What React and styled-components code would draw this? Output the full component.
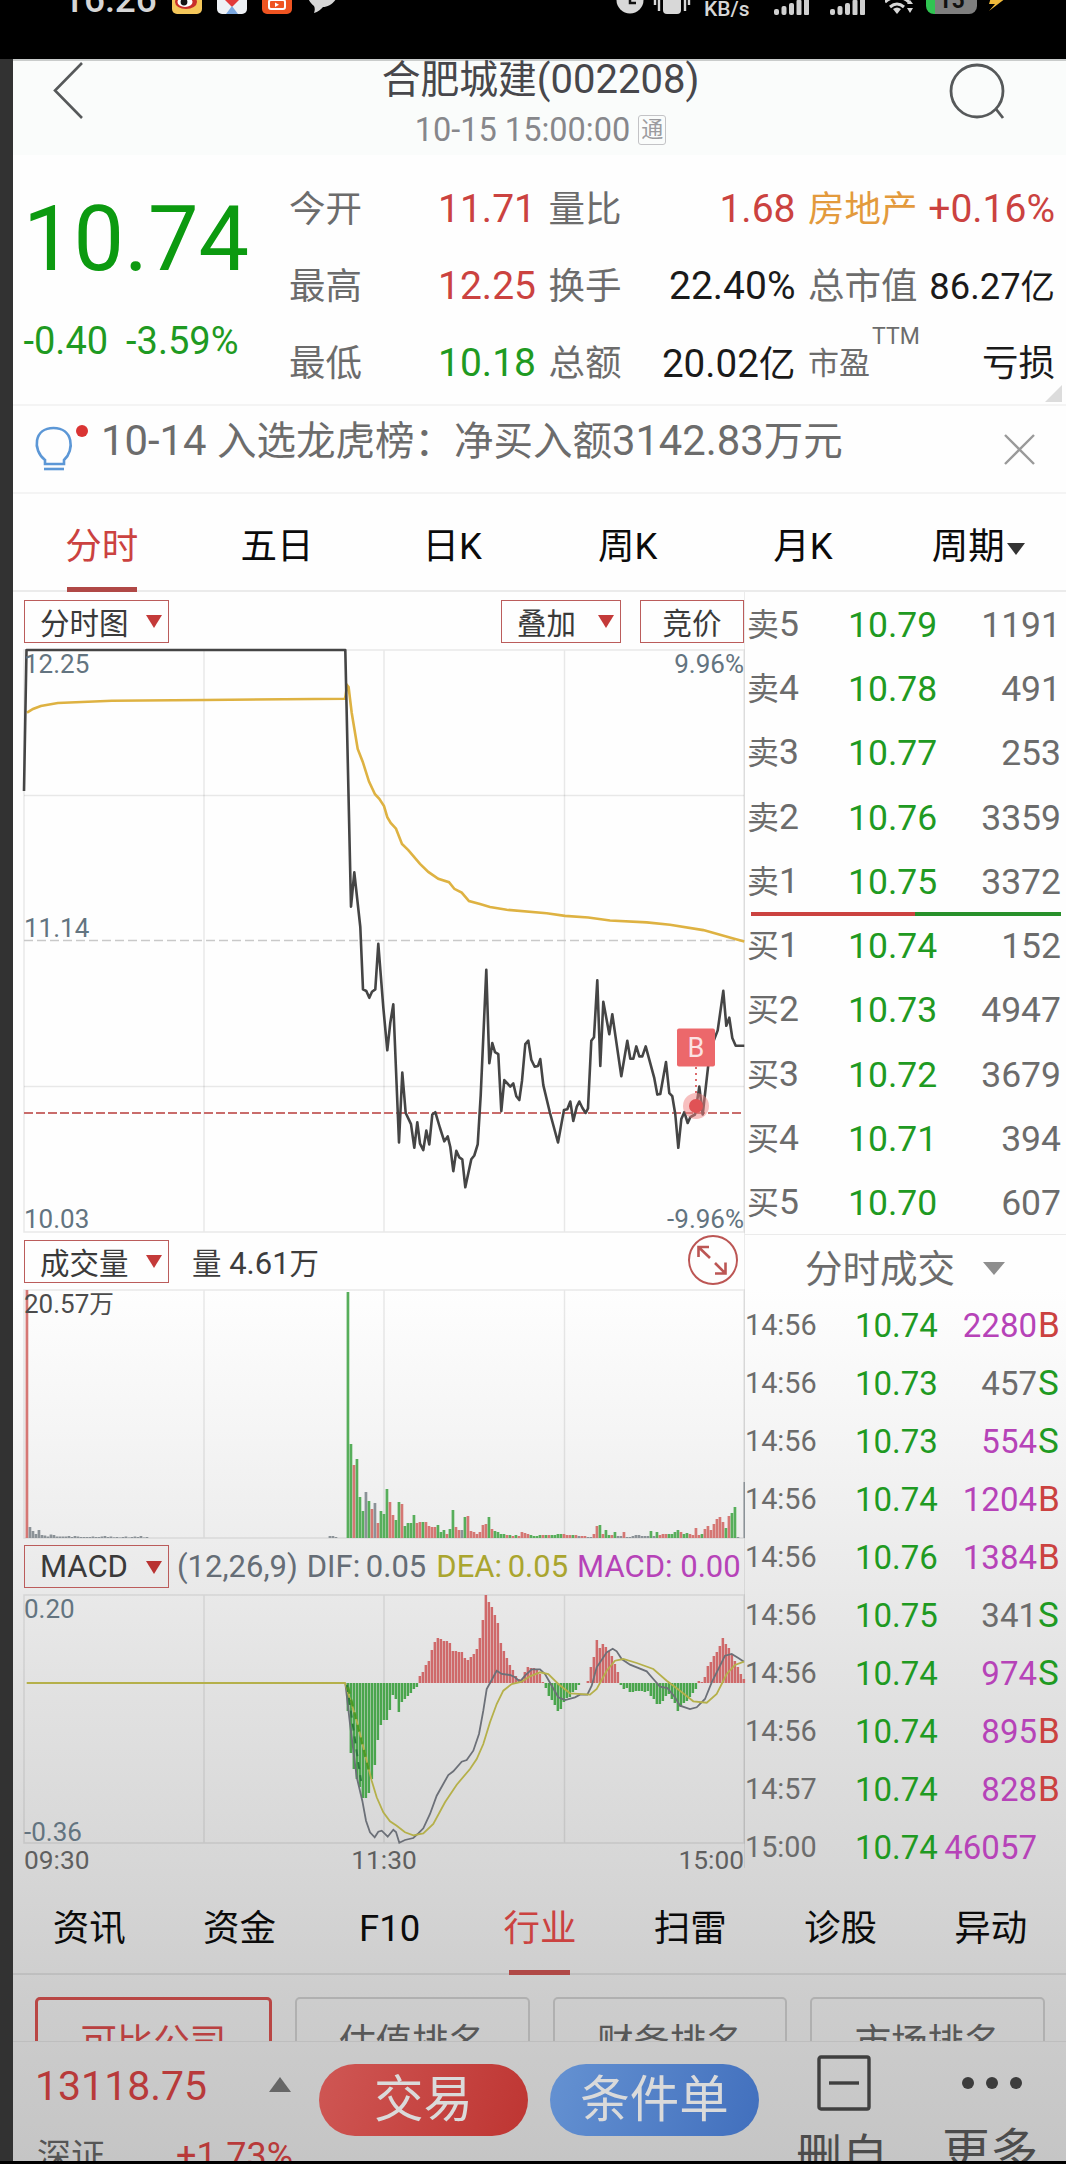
import styled, { createGlobalStyle } from "styled-components";

const colors = {
	red: "#cb4240",
	green: "#1f9a22",
	grey: "#6c6c6c",
	black: "#1a1a1a",
	orange: "#e39a3c",
	purple: "#b643b8",
	slate: "#637480",
	grid: "rgba(0, 0, 0, 0.075)",
};

const GlobalStyle = createGlobalStyle`
	* {
		box-sizing: border-box;
	}
	body {
		margin: 0;
		background: #000;
		font-family: Roboto, "Noto Sans CJK SC", sans-serif;
		white-space: nowrap;
	}
	svg {
		display: block;
		flex-shrink: 0;
	}
`;

const Screen = styled.div`
	width: 1066px;
	height: 2164px;
	overflow: hidden;
	display: flex;
	flex-direction: column;
	border-bottom: 3px solid #000;
`;

/* ---------- status bar ---------- */

const StatusBar = styled.div`
	height: 59px;
	flex-shrink: 0;
	background: #000;
	color: #d6d6d6;
	overflow: hidden;
`;

const StatusClock = styled.span`
	font-size: 37px;
	line-height: 36px;
	font-weight: 500;
	width: 109px;
	margin-top: -18px;
`;

const StatusRow = styled.div`
	display: flex;
	height: 18px;
	padding-left: 63px;
	overflow: hidden;
`;

const StatusSpeed = styled.span`
	font-size: 21px;
	line-height: 20px;
	font-weight: 500;
	width: 46px;
	margin: -1px 24px 0 13px;
`;

const Battery = styled.span`
	width: 51px;
	height: 34px;
	margin: -20px 9px 0 13px;
	border-radius: 8px;
	background: linear-gradient(90deg, #30c552 9px, #7e7e7e 9px);
	color: #111;
	font-size: 23px;
	font-weight: 700;
	line-height: 41px;
	text-align: center;
`;

/* ---------- page ---------- */

const Page = styled.main`
	flex: 1;
	min-height: 0;
	display: flex;
	flex-direction: column;
	overflow: hidden;
	border-left: 13px solid #323232;
	background: linear-gradient(
		180deg,
		#fefefe 1230px,
		#f5f5f5 1370px,
		#ededed 1480px,
		#e1e1e1 1640px,
		#d7d7d7 1800px,
		#cdcdcd 1940px,
		#c5c5c5 2102px
	);
`;

const Header = styled.header`
	height: 96px;
	flex-shrink: 0;
	display: flex;
	justify-content: space-between;
	border-top: 2px solid #c9cccb;
	background: #fafcfb;
`;

const Heading = styled.div`
	display: flex;
	flex-direction: column;
	align-items: center;
	margin-left: 22px;
`;

const Title = styled.h1`
	margin: -3px 0 0;
	font-size: 40px;
	font-weight: 400;
	line-height: 44px;
	color: #47474b;
`;

const Han = styled.span`
	font-size: ${({ $size }) => $size || 0.95}em;
`;

const SubTitle = styled.div`
	display: flex;
	align-items: center;
	gap: 8px;
	height: 54px;
	padding-top: 3px;
	font-size: 32.5px;
	color: #87878b;
`;

const Tag = styled.span`
	width: 28px;
	height: 30px;
	border: 1.5px solid #c3c3c6;
	border-radius: 3px;
	font-size: 22px;
	line-height: 27px;
	text-align: center;
	color: #9b9b9f;
`;

/* ---------- quote ---------- */

const Quote = styled.section`
	position: relative;
	height: 251px;
	flex-shrink: 0;
	display: flex;
	padding: 15px 11px 0 0;
	border-bottom: 2px solid #f4f4f4;
`;

const LastPrice = styled.div`
	width: 276px;
	color: ${colors.green};
`;

const Price = styled.div`
	font-size: 90px;
	line-height: 100px;
	margin-top: 20px;
	padding-left: 10px;
	color: #0c9a10;
`;

const Change = styled.div`
	display: flex;
	gap: 18px;
	padding: 29px 0 0 10.5px;
	font-size: 38px;
	line-height: 44px;
`;

const Stats = styled.div`
	flex: 1;
	display: grid;
	grid-template-columns: 247px 247px 247px;
	column-gap: 12.5px;
	grid-auto-rows: 77px;
`;

const Stat = styled.div`
	display: flex;
	align-items: center;
	justify-content: space-between;
	font-size: 37px;
	color: ${colors.grey};
`;

const StatLabel = styled.span`
	display: flex;
	margin-top: -4px;
	color: ${({ $tone }) => colors[$tone] || "inherit"};
	font-size: ${({ $small }) => ($small ? 31 : 36.5)}px;
`;

const Superscript = styled.sup`
	margin: -14px 0 0 2px;
	font-size: 23px;
	line-height: 26px;
`;

const StatValue = styled.span`
	margin-top: ${({ $lift }) => ($lift ? -4 : 0)}px;
	color: ${({ $tone }) => colors[$tone]};
	font-size: ${({ $size }) => $size || 39}px;
`;

const Corner = styled.i`
	position: absolute;
	right: 4px;
	bottom: 2px;
	border-left: 17px solid transparent;
	border-bottom: 17px solid #dcdcdc;
`;

const Notice = styled.section`
	height: 88px;
	flex-shrink: 0;
	display: flex;
	align-items: center;
	padding: 0 31px 0 20px;
	border-bottom: 2px solid #f4f4f4;
	font-size: 41.8px;
	color: ${colors.grey};

	svg:first-child {
		margin-top: 3px;
	}
`;

const NoticeText = styled.p`
	flex: 1;
	margin: -15px 0 0 10px;
	line-height: 50px;
`;

/* ---------- tabs ---------- */

const Tabs = styled.nav`
	height: ${({ $height }) => $height}px;
	flex-shrink: 0;
	display: flex;
	padding-left: 1px;
	border-bottom: 2px solid ${colors.grid};
	font-size: 36.5px;
`;

const Tab = styled.button`
	flex: 1;
	position: relative;
	display: flex;
	align-items: center;
	justify-content: center;
	gap: 2px;
	padding: ${({ $drop }) => $drop}px 0 0;
	border: 0;
	background: none;
	font: inherit;
	line-height: 54px;
	color: ${({ $active }) => ($active ? colors.red : "#0b0b0b")};

	&::after {
		content: "";
		display: ${({ $active }) => ($active ? "block" : "none")};
		position: absolute;
		bottom: -2px;
		width: ${({ $line }) => $line}px;
		height: 5px;
		background: #b04846;
	}
`;

const Caret = styled.i`
	margin-top: ${({ $drop }) => $drop || 2}px;
	border: ${({ $w }) => $w / 2}px solid transparent;
	border-top: ${({ $h }) => $h}px solid ${({ $color }) => $color};
	border-bottom: 0;
`;

/* ---------- charts ---------- */

const Market = styled.section`
	height: 1276px;
	flex-shrink: 0;
	display: flex;
`;

const Charts = styled.div`
	width: 731px;
	flex-shrink: 0;
	padding-left: 11px;
	display: flex;
	flex-direction: column;
`;

const ChartBar = styled.div`
	height: ${({ $height }) => $height || 58}px;
	flex-shrink: 0;
	display: flex;
	align-items: center;
	font-size: 31px;
	color: #3d3d3d;
`;

const Picker = styled.button`
	width: ${({ $w }) => $w || 145}px;
	height: 43px;
	flex-shrink: 0;
	display: flex;
	align-items: center;
	justify-content: ${({ $center }) => ($center ? "center" : "space-between")};
	margin-left: ${({ $push }) => $push || 0};
	padding: 0 6px 1px ${({ $center }) => ($center ? 6 : 15)}px;
	border: 1.5px solid #bb5c5b;
	background: none;
	font-family: inherit;
	font-size: ${({ $size }) => $size || 29.5}px;
	color: #3a3a3a;
`;

const Reading = styled.span`
	margin-left: ${({ $gap }) => $gap}px;
	color: ${({ $color }) => $color};
	word-spacing: ${({ $tight }) => ($tight ? -2 : 0)}px;
`;

const RoundButton = styled.button`
	width: 50px;
	height: 50px;
	margin: -3px 6px 0 auto;
	padding: 0;
	border: 2.5px solid #bc5654;
	border-radius: 50%;
	background: none;
`;

const Plot = styled.div`
	position: relative;
	height: ${({ $height }) => $height}px;
	flex-shrink: 0;

	svg {
		overflow: visible;
	}
`;

const AxisLabel = styled.span`
	position: absolute;
	${({ $right }) => ($right ? "right: 0" : "left: 0")};
	top: ${({ $top }) => $top}px;
	font-size: 26px;
	line-height: 30px;
	color: ${({ $dark }) => ($dark ? "#4c4c4c" : colors.slate)};
`;

const TimeAxis = styled.div`
	display: flex;
	justify-content: space-between;
	padding-top: 1px;
	font-size: 26.3px;
	line-height: 32px;
	color: #5f5f5f;
`;

/* ---------- order book ---------- */

const Book = styled.aside`
	flex: 1;
	border-left: 1.5px solid ${colors.grid};
	color: ${colors.grey};
`;

const BookRow = styled.div`
	height: ${({ $h }) => $h}px;
	display: flex;
	align-items: center;
	padding: 2px 5px 0 2px;
	font-size: 35.5px;
	line-height: 44px;
`;

const BookLabel = styled.span`
	width: 101px;
	margin-top: -1px;
`;

const BookPrice = styled.span`
	color: ${colors.green};
`;

const BookVolume = styled.span`
	margin-left: auto;
`;

const Balance = styled.div`
	height: 4px;
	margin: -1px 5px -3px 6px;
	background: linear-gradient(90deg, ${colors.red} 53%, #27902a 53%);
`;

const DealHead = styled.div`
	height: 62px;
	display: flex;
	align-items: center;
	gap: 28px;
	padding: 0 0 1px 60px;
	border-top: 1.5px solid ${colors.grid};
	font-size: 37.5px;
`;

const DealRow = styled.div`
	height: 58px;
	display: grid;
	grid-template-columns: 110px 84px 98px 22px;
	align-items: center;
	font-size: 33px;
`;

const DealTime = styled.span`
	font-size: 28.8px;
`;

const DealVolume = styled.span`
	text-align: right;
	color: ${({ $large }) => ($large ? colors.purple : "inherit")};
`;

const DealSide = styled.span`
	padding-left: 1px;
	font-size: 35px;
	color: ${({ $side }) => ($side === "B" ? colors.red : colors.green)};
`;

/* ---------- bottom ---------- */

const Cards = styled.section`
	height: 66px;
	flex-shrink: 0;
	display: flex;
	gap: 23px;
	padding: 22px 21px 0 22px;
	overflow: hidden;
`;

const Card = styled.button`
	flex: 1;
	height: 92px;
	padding: 0;
	border: ${({ $active }) => ($active ? "3px solid #b94644" : "2px solid #b0b0b0")};
	border-radius: 5px;
	background: none;
	font-family: inherit;
	font-size: 36.5px;
	line-height: 80px;
	color: ${({ $active }) => ($active ? "#b94040" : "#585858")};
`;

const ActionBar = styled.footer`
	flex: 1;
	min-height: 0;
	display: flex;
	border-top: 1px solid #bebebe;
	overflow: hidden;
`;

const IndexBlock = styled.div`
	width: 306px;
	padding: 20px 26px 0 22px;
	flex-shrink: 0;
	color: #b83a3a;
`;

const IndexRow = styled.div`
	height: ${({ $h }) => $h}px;
	display: flex;
	align-items: center;
	justify-content: space-between;
	font-size: ${({ $size }) => $size}px;
	line-height: ${({ $h }) => $h}px;
`;

const IndexName = styled.span`
	margin-left: 2px;
	font-size: 34px;
	color: #555;
`;

const UpMark = styled.i`
	border: 11.5px solid transparent;
	border-bottom: 15px solid #666;
	border-top: 0;
	margin: 0 2px 3px 0;
`;

const PillButton = styled.button`
	width: 209px;
	height: 72px;
	flex-shrink: 0;
	margin: 22px ${({ $after }) => $after}px 0 0;
	padding: 0;
	border: 0;
	border-radius: 36px;
	background: ${({ $from, $to }) => `linear-gradient(110deg, ${$from}, ${$to})`};
	font-family: inherit;
	font-size: 49.5px;
	line-height: 72px;
	color: #dadada;
`;

const ToolButton = styled.button`
	width: 148px;
	flex-shrink: 0;
	display: flex;
	flex-direction: column;
	align-items: center;
	justify-content: flex-start;
	padding: 13px 0 0;
	border: 0;
	background: none;
	font-family: inherit;
	font-size: ${({ $size }) => $size}px;
	line-height: 56px;
	color: #4c4c4c;

	svg {
		margin-bottom: ${({ $gap }) => $gap}px;
	}
`;

const ToolName = styled.span`
	margin-left: -4px;
`;

/* ---------- data ---------- */

const stats = [
	{ label: "今开", value: "11.71", tone: "red" },
	{ label: "量比", value: "1.68", tone: "red" },
	{ label: "房地产", labelTone: "orange", value: "+0.16%", tone: "red" },
	{ label: "最高", value: "12.25", tone: "red" },
	{ label: "换手", value: "22.40%", tone: "black" },
	{ label: "总市值", value: "86.27", unit: "亿", tone: "black", size: 36.3, lift: true },
	{ label: "最低", value: "10.18", tone: "green" },
	{ label: "总额", value: "20.02", unit: "亿", tone: "black", size: 38.6, lift: true },
	{ label: "市盈", sup: "TTM", value: "亏损", tone: "black", size: 36.5, lift: true },
];

const periods = ["分时", "五日", "日K", "周K", "月K", "周期"];
const sections = ["资讯", "资金", "F10", "行业", "扫雷", "诊股", "异动"];
const rankings = ["可比公司", "估值排名", "财务排名", "市场排名"];

const asks = [
	["5", "10.79", "1191"],
	["4", "10.78", "491"],
	["3", "10.77", "253"],
	["2", "10.76", "3359"],
	["1", "10.75", "3372"],
];
const bids = [
	["1", "10.74", "152"],
	["2", "10.73", "4947"],
	["3", "10.72", "3679"],
	["4", "10.71", "394"],
	["5", "10.70", "607"],
];
const deals = [
	["14:56", "10.74", 2280, "B"],
	["14:56", "10.73", 457, "S"],
	["14:56", "10.73", 554, "S"],
	["14:56", "10.74", 1204, "B"],
	["14:56", "10.76", 1384, "B"],
	["14:56", "10.75", 341, "S"],
	["14:56", "10.74", 974, "S"],
	["14:56", "10.74", 895, "B"],
	["14:57", "10.74", 828, "B"],
	["15:00", "10.74", 46057, ""],
];

const pricePoints =
	"0,141 2.5,0 321.3,0 327,256.7 330.3,222.3 336.3,277 339,339.4 342.3,341 345.3,347.8 348,341.7 351.3,339.4 354.3,293.9 359.3,357.4 363.3,400.3 366.3,372.7 369.3,354.3 375,492.5 378.3,422.5 381.7,463 387,474.1 390.3,497.8 393.3,472.2 396,493.6 399.3,500.1 402.3,480.6 405.3,494.4 408.3,464.5 411.3,462.2 416,478 420.3,491.3 423.7,486.4 426.3,497 429.3,521.2 432.3,500.9 435.3,507.4 438.3,509.3 441.3,537.3 447.3,509.3 450.3,505.5 453.7,494.4 456.7,445.4 462.3,319.9 465.3,413.3 468.3,393 471,402.2 474.3,404.1 477.3,461.1 480.3,430.1 486.3,436.6 489.3,433.5 492.3,446.2 495.3,450 498,430.9 501.3,394.1 504.3,390.7 507.3,409.8 510.7,416.7 514,415.9 516.3,409.1 519.3,435.1 526,463 534,492.5 540,460 543.3,459.2 546.3,451.5 549.3,471 552.7,456.9 555.3,451.5 558.3,457.7 561.7,463 564,458.4 567.3,390.7 570,387.2 573.3,330.2 576.3,415.9 579.3,351.7 585.3,384.2 588.3,364.3 597.3,426.3 603.3,390.7 606.3,408.7 609.3,408.7 612.3,396.4 615.3,406.4 618.3,406.4 621.7,396.4 630.3,428.2 633.3,444.6 636.3,443.9 642,412.1 645.3,443.1 648.3,446.2 651.3,464.5 654.3,497.8 657.3,469.1 660.3,462.2 663.7,473 666.3,467.2 671,464.5 675.3,436.6 678.7,464.5 684.3,414.8 689.3,391.8 693.7,380.4 699.3,340.9 702.3,375.8 705.3,367.7 708.3,388 711.7,395.7 720.3,395.7";

const averagePoints =
	"3,62.7 9,59 16.8,56 33.8,53 88,50.7 180,50 321,48.7 323.2,35.3 324.6,37 327.7,62.7 333.7,99 338.7,111.7 345,131.6 351,144.2 355.3,148.8 360,156.1 363.3,167.2 366.7,173 372,178.7 378,194 384.3,200.1 396,213.9 404.3,221.9 414.3,228.8 425,232.2 430.3,238.8 437.7,242.6 445,251 456,254 466,257.1 482.7,259.8 522.7,263.2 541,265.9 564.3,267.5 586,270.5 622.7,272.4 646,274.7 679.3,280.1 709.3,288.5 720.3,291.6";

const difPoints =
	"321.3,88 326,129 332.7,182 338.3,205.7 342,225.7 346,237.3 350.7,242.3 354.3,236.7 357.7,235.7 363.7,241.7 369.3,234.7 372,237 375.3,247.7 381,245 389.3,243 394.3,238.3 399.3,233.3 406,219 412.7,200.7 424.3,180 429.3,176.3 437.7,166.7 442.7,165 449.3,155.7 455,139 459.3,115.7 462.7,94 466,88 472.7,75.7 477.7,79 486,80 491,82.3 496,86.7 501,80.7 507.7,74.3 516,74.3 521,79 527.7,90.7 534.3,102.3 541,105 551,102.3 556,99.7 563.3,99.7 567.7,90.7 572.7,72.3 582.7,57.3 588.7,53.7 592.7,56.3 597.7,64 606,69.7 622.7,76.3 629.3,84 636,91.7 643.3,93 651,102.3 656,110.7 666,114 672.7,112.3 681,104 687.7,87.3 697.7,67.3 701,60.7 707.7,59 714.3,63 720,66.7";

const deaPoints =
	"2.7,88 321,88 332.7,125.7 341,159 347.7,185.7 352.7,202.3 359.3,217.3 366,226.3 372.7,230.7 381,237.3 389.3,240.3 399.3,238.3 409.3,229 421,207.3 432.7,189.7 446,174 452.7,164 459.3,149 466,127.3 472.7,109 479.3,95.7 487.7,89 497.7,86.7 506,81.3 516,77.3 524.3,79 534.3,89 546,98.3 566,99.7 572.7,94 582.7,75.7 591,65.7 599.3,64 612.7,68 629.3,74 642.7,85.7 656,95.7 669.3,106.3 682.7,107.7 692.7,99 702.7,79 711,70 720,66.7";

// one entry per minute: direction + height, r = up, g = down, n = flat
const openVolume =
	"r248 n11 n7 n4 n8 n3 n2.5 n1.5 n3.5 n3 n1.5 n1.5 n1.5 n1.5 n2 n1 n2 n1.5 n1 n1 n1 n1 n1.5 n1 n1 n1.5 n2 n1 n1.5 n.7 n1 n.5 n1 n1.5 n.5 n1 n1.5 n1 n2 n.5 n1";
const lateVolume =
	"g246 g94 r73 g79 g41 g27 n46 g37 r29 n35 r15 g27 g24 g49 r36 r23 g18 g36 r34 g12 g15 g15 g23 r15 r16 g16 r16 r12 r11 r11 g13 g6 g8 r4 g9 g28 r11 r8 n8 g21 r22 r7 r6 r4 r6 r13 r14 g21 r9 g7 g6 g4 g4 r3 g3 r2 g3 r2 r6 r5 r4 g3 g2 g2 g3 r3 g3 r3 g3 g3 g4 g4 r4 r3 r3 g3 r3 n2 r2 r2 n1 n1 r4 r12 g13 r4 g8 g3 r3 g6 n2 n2 r6 n1 n1 n2 n3 n3 n2 n2 n2 g7 n2 g6 r3 r4 r4 g4 g4 g6 g8 r6 g4 g5 r4 r3 r10 r3 g4 r9 r12 r8 r14 r19 r21 r16 g10 r22 g25 g31 n1";

const parseBars = (text, start) =>
	text.split(" ").map((item, i) => ({
		index: start + i,
		kind: item[0],
		value: Number(item.slice(1)),
	}));

const volumeBars = [
	...parseBars(openVolume, 1),
	...parseBars("n2 n2 n1", 102),
	...parseBars(lateVolume, 108),
];

// histogram height per minute from 11:18
const macdBars = [
	-28, -70, -86, -96, -104, -115, -115, -110, -96, -82, -57, -42, -37, -37, -27, -12, -16, -29, -19,
	-16, -13, -10, -6, -4, 7, 11, 18, 22, 33, 41, 45, 44, 42, 42, 40, 32, 32, 31, 31, 25, 23, 26, 29,
	34, 45, 63, 88, 81, 76, 68, 60, 40, 32, 25, 18, 13, 7, 4, 4, 11, 16, 15, 15, 13, 9, 1, -5, -13,
	-17, -22, -28, -26, -19, -15, -14, -9, -7, -2, 0, 0, 2, 16, 26, 43, 35, 39, 36, 32, 27, 19, 11, -2,
	-6, -5, -9, -9, -8, -8, -8, -9, -8, -13, -16, -21, -21, -18, -13, -11, -16, -20, -28, -24, -20,
	-18, -14, -10, -6, 2, 1, 6, 17, 21, 27, 31, 37, 45, 39, 35, 29, 22, 16, 9, 4,
];

const barColors = { r: "#d57774", g: "#57ae5b", n: "#8b9297" };

/* ---------- pieces ---------- */

const Grid = ({ height, rows = [] }) => (
	<g stroke="#000" strokeOpacity="0.085" strokeWidth="1.5" fill="none">
		<path d={`M0 0H720V${height}H0Z M180 0V${height} M360 0V${height} M540.5 0V${height}`} />
		{rows.map((y) => (
			<path key={y} d={`M0 ${y}H720`} />
		))}
	</g>
);

const PriceChart = () => (
	<Plot $height={582}>
		<svg width="720" height="582">
			<Grid height={582} rows={[145.5, 436.5]} />
			<path d="M0 290.5H720" stroke="#c9c9c9" strokeWidth="1.5" strokeDasharray="9 4" />
			<path d="M0 463H720" stroke="#c96c6b" strokeWidth="2" strokeDasharray="9 3" />
			<polyline points={averagePoints} fill="none" stroke="#deb242" strokeWidth="2.6" />
			<polyline
				points={pricePoints}
				fill="none"
				stroke="#454545"
				strokeWidth="2.6"
				strokeLinejoin="round"
			/>
			<path d="M672 417V444" stroke="#dd6a6c" strokeWidth="2" strokeDasharray="2 4" />
			<circle cx="672" cy="456" r="13" fill="#f08080" fillOpacity="0.5" />
			<circle cx="672" cy="456" r="7" fill="#e05255" />
			<rect x="653" y="378.5" width="38" height="38" rx="2" fill="#ec686b" />
			<text x="672" y="407" fill="#fbe3e3" fontSize="27" textAnchor="middle">
				B
			</text>
		</svg>
		<AxisLabel $top={-1}>12.25</AxisLabel>
		<AxisLabel $top={263}>11.14</AxisLabel>
		<AxisLabel $top={554}>10.03</AxisLabel>
		<AxisLabel $top={-1} $right>
			9.96%
		</AxisLabel>
		<AxisLabel $top={554} $right>
			-9.96%
		</AxisLabel>
	</Plot>
);

const VolumeChart = () => (
	<Plot $height={248}>
		<svg width="720" height="248">
			<Grid height={248} />
			{volumeBars.map(({ index, kind, value }) => (
				<rect
					key={index}
					x={index * 3 - 1.4}
					y={248 - value}
					width="2.7"
					height={value}
					fill={barColors[kind]}
				/>
			))}
			<rect x="719.5" y="192" width="1.5" height="56" fill={barColors.n} />
		</svg>
		<AxisLabel $top={-1} $dark>
			20.57<Han>万</Han>
		</AxisLabel>
	</Plot>
);

const MacdChart = () => (
	<Plot $height={248}>
		<svg width="720" height="248">
			<Grid height={248} />
			{macdBars.map((value, i) => (
				<rect
					key={i}
					x={(108 + i) * 3 - 1.4}
					y={value > 0 ? 88 - value : 88}
					width="2.5"
					height={Math.abs(value)}
					fill={value > 0 ? "#cf696a" : "#4aa54d"}
				/>
			))}
			<polyline points={difPoints} fill="none" stroke="#6c7078" strokeWidth="1.8" />
			<polyline points={deaPoints} fill="none" stroke="#b5b04a" strokeWidth="1.8" />
			<path d="M323 90L337 186" stroke="#2b7a3c" strokeWidth="2" strokeDasharray="7 6" />
			<path d="M324 92L346 180" stroke="#4c9a26" strokeWidth="2.4" strokeDasharray="7 6" />
		</svg>
		<AxisLabel $top={-1}>0.20</AxisLabel>
		<AxisLabel $top={222}>-0.36</AxisLabel>
	</Plot>
);

const Signal = () => (
	<svg width="36" height="16" fill="#d0d0d0">
		<rect x="0" y="9" width="5" height="6" rx="2" />
		<rect x="7.5" y="6" width="5" height="9" rx="2" />
		<rect x="15" y="3" width="5" height="12" rx="2" />
		<rect x="22.5" y="0" width="5" height="15" rx="1" />
		<rect x="30" y="-3" width="5" height="18" rx="1" />
	</svg>
);

const AppBadges = styled.svg`
	margin-right: 278px;
`;

const WifiIcon = styled.svg`
	margin-left: 19px;
`;

const Status = () => (
	<StatusBar>
		<StatusRow>
			<StatusClock>16:26</StatusClock>
			<AppBadges width="166" height="16">
				<rect x="0" y="-16" width="30" height="30" rx="5" fill="#f5c75a" />
				<ellipse cx="14" cy="2" rx="11" ry="7" fill="#c92f2b" />
				<ellipse cx="13" cy="2" rx="7.5" ry="5" fill="#fff" />
				<circle cx="12" cy="2" r="3.4" fill="#151515" />
				<rect x="45" y="-16" width="30" height="30" rx="5" fill="#eef1f5" />
				<path d="M53 0h14l-7 7z" fill="#e23a3a" />
				<path d="M60 6l6 8H54z" fill="#7aa7e0" />
				<rect x="90" y="-16" width="30" height="30" rx="5" fill="#ef5421" />
				<rect x="97" y="0" width="16" height="9" rx="2" fill="none" stroke="#fff" strokeWidth="2" />
				<path d="M103 2.500V7L107 4.700Z" fill="#fff" />
				<path
					d="M135-8c0-12 31-12 31 0 0 9-9 15-15 15-2 2-5 5-9 6 1-3 1-5 0-7-4-3-7-8-7-14z"
					fill="#d6d6d6"
				/>
			</AppBadges>
			<svg width="75" height="16">
				<circle cx="14" cy="0" r="13.5" fill="#d8d8d8" />
				<path d="M14-6V3H20" stroke="#111" strokeWidth="2.5" fill="none" />
				<rect x="47" y="-14" width="18" height="28" rx="4" fill="#d8d8d8" />
				<path d="M43-8V11M39-6V5M69-8V11M73-6V5" stroke="#d8d8d8" strokeWidth="2.4" />
			</svg>
			<StatusSpeed>KB/s</StatusSpeed>
			<Signal />
			<svg width="20" height="16" />
			<Signal />
			<WifiIcon width="28" height="16" fill="none" stroke="#d8d8d8">
				<path d="M0 2Q12-8 24 2" strokeWidth="3" />
				<path d="M5 7Q12 1 19 7" strokeWidth="3" />
				<path d="M8 9l4 5 4-5q-4-3-8 0z" fill="#d8d8d8" stroke="none" />
				<path d="M22 4l3-4 3 4zM22 8h6l-3 5z" fill="#d8d8d8" stroke="none" />
			</WifiIcon>
			<Battery>15</Battery>
			<svg width="24" height="14">
				<path d="M6-6L3 4h6L3 11 20-2h-8z" fill="#f0b93a" />
			</svg>
		</StatusRow>
	</StatusBar>
);

const BookRows = ({ side, rows, height }) =>
	rows.map(([level, price, volume]) => (
		<BookRow key={level} $h={height}>
			<BookLabel>
				<Han $size={0.9}>{side}</Han>
				{level}
			</BookLabel>
			<BookPrice>{price}</BookPrice>
			<BookVolume>{volume}</BookVolume>
		</BookRow>
	));

const App = () => (
	<Screen lang="zh-CN">
		<GlobalStyle />
		<Status />
		<Page>
			<Header>
				<svg width="100" height="92" fill="none" stroke="#56595a" strokeWidth="2.6">
					<path d="M69 2L42 29.500L69 57" />
				</svg>
				<Heading>
					<Title>
						<Han $size={0.97}>合肥城建</Han>(002208)
					</Title>
					<SubTitle>
						10-15 15:00:00 <Tag>通</Tag>
					</SubTitle>
				</Heading>
				<svg width="120" height="92" fill="none" stroke="#56595a" strokeWidth="2.8">
					<circle cx="31" cy="30" r="26" />
					<path d="M50 48L57 57" />
				</svg>
			</Header>

			<Quote>
				<LastPrice>
					<Price>10.74</Price>
					<Change>
						<span>-0.40</span>
						<span>-3.59%</span>
					</Change>
				</LastPrice>
				<Stats>
					{stats.map((item) => (
						<Stat key={item.label}>
							<StatLabel $tone={item.labelTone} $small={item.sup}>
								{item.label}
								{item.sup && <Superscript>{item.sup}</Superscript>}
							</StatLabel>
							<StatValue $tone={item.tone} $size={item.size} $lift={item.lift}>
								{item.value}
								{item.unit && <Han>{item.unit}</Han>}
							</StatValue>
						</Stat>
					))}
				</Stats>
				<Corner />
			</Quote>

			<Notice>
				<svg width="58" height="56" fill="none" stroke="#5c97d6" strokeWidth="2.6">
					<path d="M12 41V37C-1 27 1 5 20.500 5S42 27 31 37V41Z" />
					<path d="M11 46H31" />
					<circle cx="49" cy="8" r="6" fill="#da3433" stroke="none" />
				</svg>
				<NoticeText>
					10-14 <Han $size={0.945}>入选龙虎榜：净买入额</Han>3142.83<Han $size={0.945}>万元</Han>
				</NoticeText>
				<svg width="31" height="31" stroke="#9a9a9a" strokeWidth="2.4">
					<path d="M1 1L30 30M30 1L1 30" />
				</svg>
			</Notice>

			<Tabs $height={98}>
				{periods.map((name, i) => (
					<Tab key={name} $active={i === 0} $line={70} $drop={9}>
						{name}
						{name === "周期" && <Caret $w={19} $h={12} $drop={4} $color="#333" />}
					</Tab>
				))}
			</Tabs>

			<Market>
				<Charts>
					<ChartBar>
						<Picker>
							分时图 <Caret $w={17} $h={13} $color="#c43a39" />
						</Picker>
						<Picker $w={120} $push="auto">
							叠加 <Caret $w={17} $h={13} $color="#c43a39" />
						</Picker>
						<Picker $w={104} $push="19px" $center>
							竞价
						</Picker>
					</ChartBar>
					<PriceChart />

					<ChartBar>
						<Picker>
							成交量 <Caret $w={17} $h={13} $color="#c43a39" />
						</Picker>
						<Reading $gap={23}>
							<Han>量</Han> 4.61<Han>万</Han>
						</Reading>
						<RoundButton>
							<svg width="45" height="45" fill="none" stroke="#bc5654" strokeWidth="2.6">
								<path d="M20 21L9 10.500M8.500 20V10H19M25 26L35 36M35.500 25.500V36.500H25" />
							</svg>
						</RoundButton>
					</ChartBar>
					<VolumeChart />

					<ChartBar $height={57}>
						<Picker $size={31}>
							MACD <Caret $w={17} $h={13} $color="#b93332" />
						</Picker>
						<Reading $gap={8} $color="#656d76">
							(12,26,9)
						</Reading>
						<Reading $gap={9} $color="#656d76" $tight>
							DIF: 0.05
						</Reading>
						<Reading $gap={10} $color="#aaa52f" $tight>
							DEA: 0.05
						</Reading>
						<Reading $gap={9} $color={colors.purple}>
							MACD: 0.00
						</Reading>
					</ChartBar>
					<MacdChart />
					<TimeAxis>
						<span>09:30</span>
						<span>11:30</span>
						<span>15:00</span>
					</TimeAxis>
				</Charts>

				<Book>
					<BookRows side="卖" rows={asks} height={64.2} />
					<Balance />
					<BookRows side="买" rows={bids} height={64.3} />
					<DealHead>
						分时成交 <Caret $w={23} $h={13} $drop={6} $color="#8e8e8e" />
					</DealHead>
					{deals.map(([time, price, volume, side], i) => (
						<DealRow key={i}>
							<DealTime>{time}</DealTime>
							<BookPrice>{price}</BookPrice>
							<DealVolume $large={volume > 500}>{volume}</DealVolume>
							<DealSide $side={side}>{side}</DealSide>
						</DealRow>
					))}
				</Book>
			</Market>

			<Tabs $height={107}>
				{sections.map((name) => (
					<Tab key={name} $active={name === "行业"} $line={61} $drop={17}>
						{name}
					</Tab>
				))}
			</Tabs>

			<Cards>
				{rankings.map((name, i) => (
					<Card key={name} $active={i === 0}>
						{name}
					</Card>
				))}
			</Cards>

			<ActionBar>
				<IndexBlock>
					<IndexRow $h={48} $size={41}>
						13118.75 <UpMark />
					</IndexRow>
					<IndexRow $h={93} $size={36}>
						<IndexName>深证</IndexName>+1.73%
					</IndexRow>
				</IndexBlock>
				<PillButton $from="#cf5754" $to="#be3532" $after={22}>
					交易
				</PillButton>
				<PillButton $from="#6592d2" $to="#416fbd" $after={11}>
					条件单
				</PillButton>
				<ToolButton $size={46} $gap={17}>
					<svg width="54" height="56" fill="none" stroke="#3f3f3f" strokeWidth="3.4">
						<rect x="2" y="2" width="50" height="52" rx="2" />
						<path d="M12 28H42" />
					</svg>
					<ToolName>删自</ToolName>
				</ToolButton>
				<ToolButton $size={48} $gap={13}>
					<svg width="60" height="56" fill="#3c3c3c">
						<circle cx="6" cy="28" r="6" />
						<circle cx="30" cy="28" r="6" />
						<circle cx="54" cy="28" r="6" />
					</svg>
					<ToolName>更多</ToolName>
				</ToolButton>
			</ActionBar>
		</Page>
	</Screen>
);

export default App;
